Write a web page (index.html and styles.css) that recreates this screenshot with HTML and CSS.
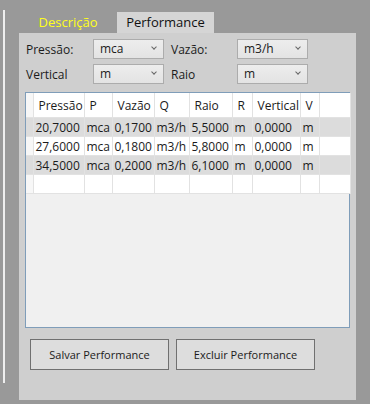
FILE: index.html
```html
<!DOCTYPE html>
<html lang="pt">
  <head>
    <meta charset="UTF-8" />
    <meta name="viewport" content="width=device-width, initial-scale=1.0" />
    <title>Performance</title>
    <link rel="stylesheet" href="styles.css">
  </head>
  <body>
    <div class="side-line"></div>
    <div class="tabs">
      <div class="tab-strip">
        <div class="tab">Descrição</div>
        <div class="tab active">Performance</div>
      </div>
      <div class="panel">
        <div class="units">
          <label>Pressão:</label>
          <div class="combo">mca<span class="chev"></span></div>
          <label class="second">Vazão:</label>
          <div class="combo">m3/h<span class="chev"></span></div>
          <label>Vertical</label>
          <div class="combo">m<span class="chev"></span></div>
          <label class="second">Raio</label>
          <div class="combo">m<span class="chev"></span></div>
        </div>

        <div class="grid">
          <table>
            <colgroup>
              <col style="width: 7px" />
              <col style="width: 51px" />
              <col style="width: 28px" />
              <col style="width: 42px" />
              <col style="width: 35px" />
              <col style="width: 43px" />
              <col style="width: 20px" />
              <col style="width: 48px" />
              <col style="width: 19px" />
              <col style="width: 31px" />
            </colgroup>
            <thead>
              <tr>
                <th></th><th>Pressão</th><th>P</th><th>Vazão</th><th>Q</th><th>Raio</th><th>R</th><th>Vertical</th><th>V</th><th></th>
              </tr>
            </thead>
            <tbody>
              <tr class="alt">
                <td></td><td>20,7000</td><td>mca</td><td>0,1700</td><td>m3/h</td><td>5,5000</td><td>m</td><td>0,0000</td><td>m</td><td></td>
              </tr>
              <tr>
                <td></td><td>27,6000</td><td>mca</td><td>0,1800</td><td>m3/h</td><td>5,8000</td><td>m</td><td>0,0000</td><td>m</td><td></td>
              </tr>
              <tr class="alt">
                <td></td><td>34,5000</td><td>mca</td><td>0,2000</td><td>m3/h</td><td>6,1000</td><td>m</td><td>0,0000</td><td>m</td><td></td>
              </tr>
              <tr>
                <td></td><td></td><td></td><td></td><td></td><td></td><td></td><td></td><td></td><td></td>
              </tr>
            </tbody>
          </table>
        </div>

        <div class="actions">
          <button>Salvar Performance</button>
          <button>Excluir Performance</button>
        </div>
      </div>
    </div>
  </body>
</html>
```

FILE: styles.css
```css
body {
  margin: 0;
  height: 404px;
  display: flex;
  align-items: flex-start;
  background-color: #999999;
  font-family: "Open Sans", "Noto Sans", sans-serif;
  font-size: 11px;
  color: #1b1b1b;
  overflow: hidden;
}

.side-line {
  width: 2px;
  height: 373px;
  margin: 10px 0 0 3px;
  background-color: #eeeeee;
}

.tabs {
  margin-left: 14px;
  width: 337px;
}

.tab-strip {
  display: flex;
  padding-top: 12px;
  height: 21px;
}

.tab {
  width: 98px;
  height: 21px;
  line-height: 21px;
  text-align: center;
  font-size: 13px;
  color: #ffff1a;
}

.tab.active {
  width: 97px;
  background-color: #d5d5d5;
  color: #111111;
}

.panel {
  height: 367px;
  box-sizing: border-box;
  background-color: #cfcfcf;
  padding: 6px 0 0 6px;
}

.units {
  display: grid;
  grid-template-columns: 68px 71px 73px 71px;
  grid-auto-rows: 20px;
  row-gap: 5px;
  align-items: center;
}

.units label {
  padding-left: 1px;
  font-size: 12px;
}

.units label.second {
  padding-left: 7px;
}

.combo {
  position: relative;
  height: 20px;
  box-sizing: border-box;
  border: 1px solid #acacac;
  background: linear-gradient(#ededed, #e3e3e3);
  padding-left: 6px;
  line-height: 18px;
  font-size: 12px;
}

.chev {
  position: absolute;
  right: 7px;
  top: 5px;
  width: 3px;
  height: 3px;
  border-right: 1px solid #666666;
  border-bottom: 1px solid #666666;
  transform: rotate(45deg);
}

.grid {
  margin-top: 8px;
  width: 325px;
  height: 236px;
  box-sizing: border-box;
  border: 1px solid #7f9db9;
  background-color: #f0f0f0;
}

table {
  border-collapse: collapse;
  table-layout: fixed;
  width: 324px;
}

th,
td {
  padding: 0 2px;
  text-align: left;
  font-weight: normal;
  white-space: nowrap;
  overflow: hidden;
  border-right: 1px solid #e2e2e2;
  border-bottom: 1px solid #e2e2e2;
}

th {
  height: 24px;
  padding-left: 5px;
  background-color: #ffffff;
  font-size: 12px;
}

td {
  height: 18px;
  background-color: #ffffff;
  font-size: 12px;
}

tr.alt td {
  background-color: #dcdcdc;
}

th:first-child,
td:first-child {
  padding: 0;
  background-color: #f7f7f7;
}

.actions {
  display: flex;
  gap: 7px;
  margin: 11px 0 0 5px;
}

.actions button {
  width: 139px;
  height: 31px;
  border: 1px solid #707070;
  background-color: #dddddd;
  font-family: inherit;
  font-size: 11px;
  color: #1b1b1b;
  padding: 0;
}
```
